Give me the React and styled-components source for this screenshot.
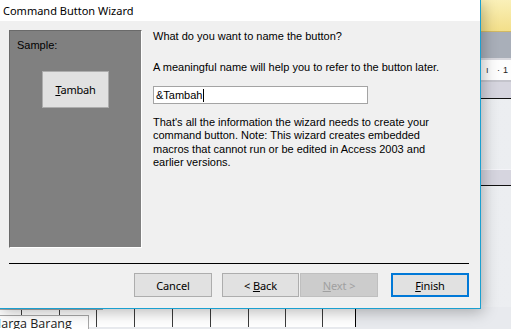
import React from "react";
import styled, { createGlobalStyle } from "styled-components";

const GlobalStyle = createGlobalStyle`
  html, body {
    margin: 0;
    padding: 0;
    overflow: hidden;
    background: #e8eaee;
  }
`;

const Desktop = styled.div`
  position: relative;
  width: 511px;
  height: 329px;
  overflow: hidden;
  background: #e8eaee;
`;

/* ---------- Access window behind the dialog ---------- */

const Backdrop = styled.div`
  display: flex;
  flex-direction: column;
  width: 100%;
  height: 100%;
`;

const RibbonTop = styled.div`
  height: 31px;
  background: linear-gradient(#faf0b8, #f3df8a);
  border-bottom: 1px solid #d2b964;
`;

const TabStrip = styled.div`
  height: 26px;
  background: #a9afb9;
`;

const Ruler = styled.div`
  height: 20px;
  background: #fdfdfd;
  border-top: 2px solid #d8d8de;
  border-bottom: 2px solid #c4c4cc;
  display: flex;
  align-items: center;
  justify-content: flex-end;
  font-family: "Liberation Sans", Arial, sans-serif;
  font-size: 9px;
  color: #222;
  letter-spacing: 3px;
  white-space: nowrap;
`;

const SectionBand = styled.div`
  height: ${(p) => p.h}px;
  background: #d6d5df;
  border-top: 1px solid ${(p) => (p.light ? "#f4f4f8" : "#d6d5df")};
  border-bottom: 1px solid #111;
`;

const CanvasArea = styled.div`
  height: ${(p) => p.h}px;
  background: linear-gradient(90deg, #e4e6ea, #eceef1);
`;

const TableRow = styled.div`
  position: relative;
  display: flex;
  height: 20px;
  background: #e8eaee;
`;

const TableCell = styled.div`
  width: ${(p) => p.w}px;
  background: #fff;
  border-right: 1px solid ${(p) => (p.last ? "#000" : "#3c3c3c")};
  box-sizing: border-box;
`;

const ControlOutline = styled.div`
  position: absolute;
  left: 0;
  top: 0;
  width: 103px;
  height: 3px;
  border-bottom: 2px solid #a8a8a8;
  border-right: 2px solid #a8a8a8;
  background: #fff;
  box-sizing: border-box;
`;

const LabelControl = styled.div`
  position: absolute;
  left: -12px;
  top: 8px;
  width: 101px;
  height: 16px;
  border: 1px solid #a8a8a8;
  background: #fff;
  box-sizing: border-box;
  font-family: "Open Sans", "Noto Sans", sans-serif;
  font-size: 12.5px;
  line-height: 16px;
  padding-left: 3px;
  color: #222;
  white-space: nowrap;
`;

/* ---------- Wizard dialog ---------- */

const Dialog = styled.div`
  position: absolute;
  left: 0;
  top: 0;
  width: 481px;
  height: 309px;
  box-sizing: border-box;
  border-right: 1px solid #1aa0d0;
  border-bottom: 1px solid #1aa0d0;
  background: #f0f0f0;
  display: flex;
  flex-direction: column;
  box-shadow: 2px 3px 14px rgba(0, 0, 0, 0.28);
`;

const TitleBar = styled.div`
  height: 21px;
  background: #fff;
  display: flex;
  align-items: center;
  padding-left: 3px;
  font-family: "Noto Sans", "Open Sans", sans-serif;
  font-size: 11px;
  color: #000;
`;

const Body = styled.div`
  flex: 1;
  display: flex;
  flex-direction: column;
  padding: 9px 11px 0 9px;
  font-family: "Liberation Sans", Arial, sans-serif;
  font-size: 11px;
  color: #000;
`;

const TopRow = styled.div`
  display: flex;
  gap: 11px;
`;

const SamplePanel = styled.div`
  width: 133px;
  height: 218px;
  box-sizing: border-box;
  background: #808080;
  border-top: 1px solid #6a6a6a;
  border-left: 1px solid #6a6a6a;
  border-right: 1px solid #fff;
  border-bottom: 1px solid #fff;
  display: flex;
  flex-direction: column;
  align-items: center;
`;

const SampleLabel = styled.div`
  align-self: flex-start;
  margin: 8px 0 0 7px;
  line-height: 13px;
`;

const SampleButton = styled.div`
  margin-top: 19px;
  width: 67px;
  height: 37px;
  box-sizing: border-box;
  background: #e1e1e1;
  border: 1px solid #adadad;
  display: flex;
  align-items: center;
  justify-content: center;
  font-family: "Noto Sans", "Open Sans", sans-serif;
  font-size: 11px;
  letter-spacing: -0.2px;
`;

const Underline = styled.span`
  text-decoration: underline;
  text-underline-offset: 1px;
`;

const Content = styled.div`
  display: flex;
  flex-direction: column;
`;

const Line = styled.div`
  line-height: 13px;
  margin-top: ${(p) => p.mt || 0}px;
  white-space: nowrap;
`;

const NameInput = styled.div`
  margin-top: 12px;
  width: 215px;
  height: 18px;
  box-sizing: border-box;
  background: #fff;
  border: 1px solid #a4a4a4;
  display: flex;
  align-items: center;
  padding-left: 2px;
  line-height: 13px;
`;

const Caret = styled.span`
  display: inline-block;
  width: 1px;
  height: 13px;
  background: #000;
  margin-left: 1px;
`;

const Paragraph = styled.p`
  margin: 12px 0 0;
  line-height: 13.4px;
  width: 300px;
`;

const Separator = styled.div`
  margin-top: 15px;
  height: 1px;
  background: #000;
`;

const ButtonRow = styled.div`
  margin-top: 9px;
  display: flex;
  justify-content: flex-end;
`;

const WizButton = styled.div`
  width: ${(p) => p.w || 78}px;
  height: 24px;
  box-sizing: border-box;
  margin-left: ${(p) => p.ml || 0}px;
  background: ${(p) => (p.disabled ? "#cccccc" : "#e1e1e1")};
  border: ${(p) =>
    p.primary ? "2px solid #0078d7" : p.disabled ? "1px solid #bfbfbf" : "1px solid #adadad"};
  color: ${(p) => (p.disabled ? "#a0a0a0" : "#000")};
  display: flex;
  align-items: center;
  justify-content: center;
  font-family: "Noto Sans", "Open Sans", sans-serif;
  font-size: 11px;
  letter-spacing: -0.1px;
`;

const cells = [22, 38, 37, 38, 38, 38, 38, 37, 37, 33];

export default function App() {
  return (
    <>
      <GlobalStyle />
      <Desktop>
        <Backdrop>
          <RibbonTop />
          <TabStrip />
          <Ruler>·  ı ·1</Ruler>
          <SectionBand h={15} />
          <CanvasArea h={70} />
          <SectionBand h={15} light />
          <CanvasArea h={121} />
          <TableRow>
            {cells.map((w, i) => (
              <TableCell key={i} w={w} last={i === cells.length - 1} />
            ))}
            <ControlOutline />
            <LabelControl>Harga Barang</LabelControl>
          </TableRow>
        </Backdrop>

        <Dialog>
          <TitleBar>Command Button Wizard</TitleBar>
          <Body>
            <TopRow>
              <SamplePanel>
                <SampleLabel>Sample:</SampleLabel>
                <SampleButton>
                  <span>
                    <Underline>T</Underline>ambah
                  </span>
                </SampleButton>
              </SamplePanel>
              <Content>
                <Line>What do you want to name the button?</Line>
                <Line mt={18}>A meaningful name will help you to refer to the button later.</Line>
                <NameInput>
                  &amp;Tambah
                  <Caret />
                </NameInput>
                <Paragraph>
                  That's all the information the wizard needs to create your
                  command button. Note: This wizard creates embedded macros
                  that cannot run or be edited in Access 2003 and earlier
                  versions.
                </Paragraph>
              </Content>
            </TopRow>
            <Separator />
            <ButtonRow>
              <WizButton>Cancel</WizButton>
              <WizButton ml={10} w={77}>
                <span>
                  &lt; <Underline>B</Underline>ack
                </span>
              </WizButton>
              <WizButton ml={1} disabled>
                <span>
                  <Underline>N</Underline>ext &gt;
                </span>
              </WizButton>
              <WizButton ml={13} primary>
                <span>
                  <Underline>F</Underline>inish
                </span>
              </WizButton>
            </ButtonRow>
          </Body>
        </Dialog>
      </Desktop>
    </>
  );
}
